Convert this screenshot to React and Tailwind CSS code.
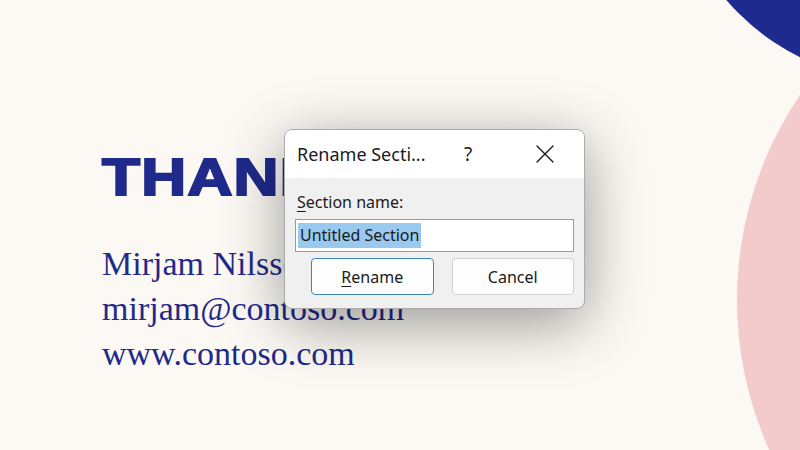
const uiFont = { fontFamily: '"Noto Sans", "Open Sans", sans-serif' };

export default function App() {
  return (
    <div className="relative w-[800px] h-[450px] overflow-hidden bg-[#fcf9f4]">
      {/* slide decorations */}
      <div className="absolute left-[671px] top-[-381px] w-[462px] h-[462px] rounded-full bg-[#1f2a8e]" />
      <div className="absolute left-[737px] top-[-65px] w-[730px] h-[730px] rounded-full bg-[#f4cbcc]" />

      {/* slide text */}
      <div className="pl-[102px] pt-[150px] text-[#1f2a8a]">
        <div
          className="inline-block origin-left scale-x-[1.22] whitespace-nowrap text-[51px] leading-[56px] font-bold tracking-[1px] [-webkit-text-stroke:2px_#1f2a8a]"
          style={{ fontFamily: '"Liberation Sans", Arial, sans-serif' }}
        >
          THANK YOU
        </div>
        <div
          className="mt-[35px] text-[34px] leading-[45px]"
          style={{ fontFamily: '"Liberation Serif", serif' }}
        >
          <div>Mirjam Nilsson</div>
          <div>mirjam@contoso.com</div>
          <div>www.contoso.com</div>
        </div>
      </div>

      {/* Rename Section dialog */}
      <div
        className="absolute left-[284px] top-[129px] w-[301px] h-[180px] rounded-[8px] border border-[#ababab] bg-[#f0f0f0] overflow-hidden shadow-[0_14px_60px_rgba(0,0,0,0.4)] text-[#1a1a1a]"
        style={uiFont}
      >
        <div className="h-[48px] bg-white flex items-center pl-[12px]">
          <span className="text-[18px] w-[150px] whitespace-nowrap">Rename Secti...</span>
          <span className="text-[19px] ml-[17px]">?</span>
          <button className="ml-[64px] flex items-center">
            <svg width="18" height="18" viewBox="0 0 18 18" fill="none" stroke="#1a1a1a" strokeWidth="1.4" strokeLinecap="round">
              <path d="M1 1L17 17M17 1L1 17" />
            </svg>
          </button>
        </div>
        <div className="px-[10px] pt-[13px]">
          <div className="text-[16px] leading-[22px] pl-[2px]">
            <span className="underline underline-offset-[3px]">S</span>ection name:
          </div>
          <div className="mt-[6px] h-[33px] bg-white border border-[#9a9a9a] flex items-center px-[2px]">
            <span className="bg-[#99c9ef] text-[16px] leading-[25px] px-[2px]">Untitled Section</span>
          </div>
          <div className="mt-[6px] flex gap-[18px] pl-[16px]">
            <button className="w-[123px] h-[37px] rounded-[4px] border border-[#3a84c6] bg-[#fdfdfd] text-[16px]">
              <span className="underline underline-offset-[3px]">R</span>ename
            </button>
            <button className="w-[123px] h-[37px] rounded-[4px] border border-[#cfcfcf] bg-[#fdfdfd] text-[16px]">
              Cancel
            </button>
          </div>
        </div>
      </div>
    </div>
  );
}
